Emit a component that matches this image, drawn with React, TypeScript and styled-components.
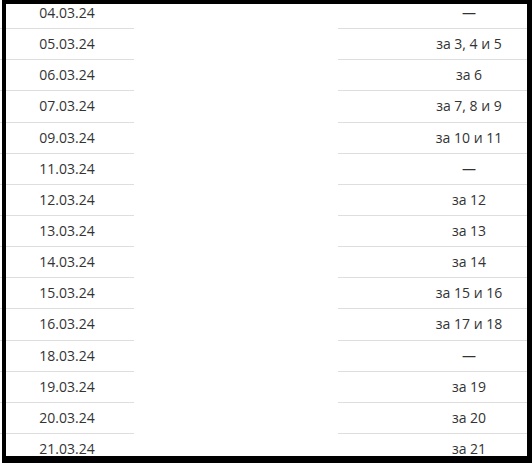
import React from "react";
import styled, { createGlobalStyle } from "styled-components";

const Global = createGlobalStyle`
  html, body {
    margin: 0;
    padding: 0;
    background: #fff;
  }
  body {
    width: 532px;
    height: 463px;
    overflow: hidden;
    font-family: "Open Sans", "Liberation Sans", sans-serif;
  }
`;

const Viewport = styled.div`
  position: relative;
  width: 532px;
  height: 463px;
  overflow: hidden;
`;

const Table = styled.table`
  border-collapse: collapse;
  table-layout: fixed;
  width: 600px;
  margin-top: -2px;
  font-size: 14px;
  color: #333;
`;

const Cell = styled.td<{ $bordered?: boolean }>`
  height: 30.15px;
  padding: 0;
  text-align: center;
  vertical-align: middle;
  line-height: 20px;
  border-bottom: 1px solid ${(p) => (p.$bordered ? "#dedede" : "transparent")};
`;

const Frame = styled.div`
  position: absolute;
  left: 2px;
  top: 0;
  right: 0;
  bottom: 0;
  border-style: solid;
  border-color: #000;
  border-width: 4px 5px 7px 4px;
  pointer-events: none;
`;

const rows: [string, string][] = [
  ["04.03.24", "—"],
  ["05.03.24", "за 3, 4 и 5"],
  ["06.03.24", "за 6"],
  ["07.03.24", "за 7, 8 и 9"],
  ["09.03.24", "за 10 и 11"],
  ["11.03.24", "—"],
  ["12.03.24", "за 12"],
  ["13.03.24", "за 13"],
  ["14.03.24", "за 14"],
  ["15.03.24", "за 15 и 16"],
  ["16.03.24", "за 17 и 18"],
  ["18.03.24", "—"],
  ["19.03.24", "за 19"],
  ["20.03.24", "за 20"],
  ["21.03.24", "за 21"],
];

export default function App() {
  return (
    <>
      <Global />
      <Viewport>
        <Table>
          <colgroup>
            <col style={{ width: 134 }} />
            <col style={{ width: 204 }} />
            <col style={{ width: 262 }} />
          </colgroup>
          <tbody>
            {rows.map(([d, t]) => (
              <tr key={d}>
                <Cell $bordered>{d}</Cell>
                <Cell />
                <Cell $bordered>{t}</Cell>
              </tr>
            ))}
          </tbody>
        </Table>
        <Frame />
      </Viewport>
    </>
  );
}
